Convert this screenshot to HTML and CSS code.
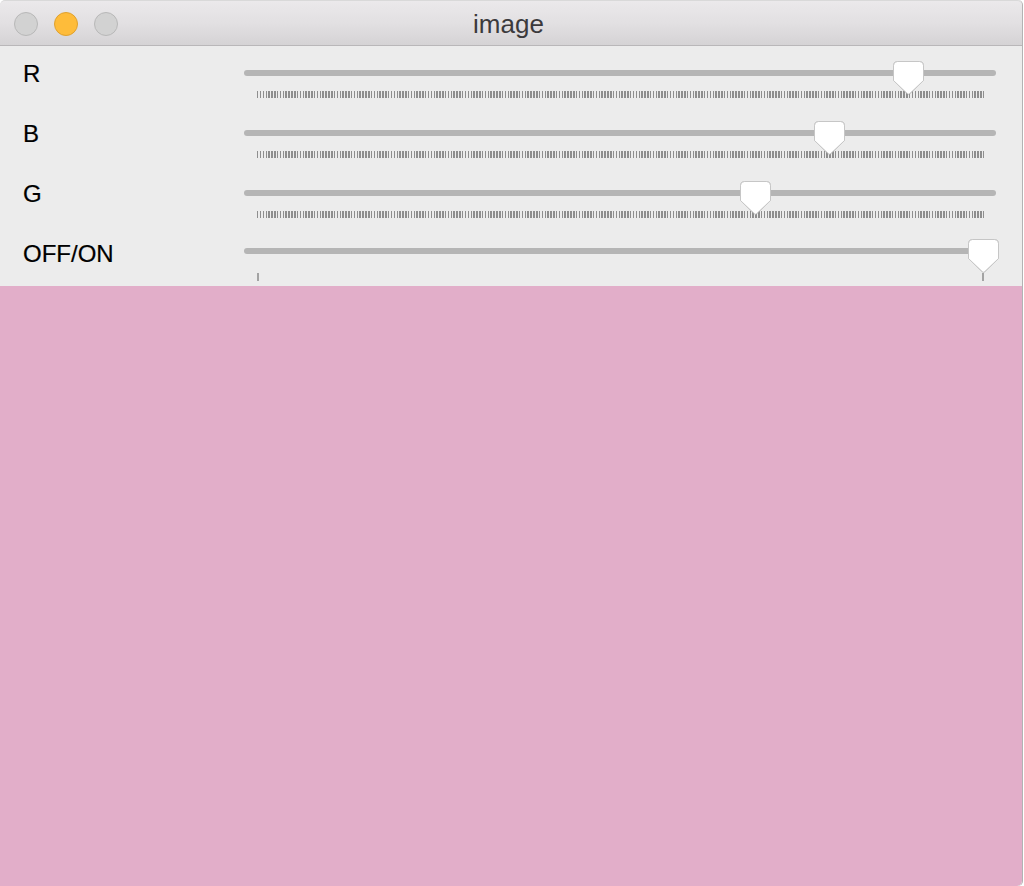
FILE: index.html
```html
<!DOCTYPE html>
<html>
<head>
<meta charset="utf-8">
<title>image</title>
<link rel="stylesheet" href="styles.css">
</head>
<body>
<div class="window">
  <div class="titlebar">
    <div class="lights">
      <span class="light"></span>
      <span class="light light-min"></span>
      <span class="light"></span>
    </div>
    <div class="title">image</div>
  </div>
  <div class="panel">
    <div class="row">
      <div class="label">R</div>
      <div class="slider">
        <div class="track">
          <svg class="thumb" style="--v:229" viewBox="0 0 31 34" width="31" height="34"><path d="M4.5 0.5H26.5Q30.5 0.5 30.5 4.5V19.5L16.8 32.6Q15.5 33.8 14.2 32.6L0.5 19.5V4.5Q0.5 0.5 4.5 0.5Z"/></svg>
        </div>
        <div class="ticks"></div>
      </div>
    </div>
    <div class="row">
      <div class="label">B</div>
      <div class="slider">
        <div class="track">
          <svg class="thumb" style="--v:201" viewBox="0 0 31 34" width="31" height="34"><path d="M4.5 0.5H26.5Q30.5 0.5 30.5 4.5V19.5L16.8 32.6Q15.5 33.8 14.2 32.6L0.5 19.5V4.5Q0.5 0.5 4.5 0.5Z"/></svg>
        </div>
        <div class="ticks"></div>
      </div>
    </div>
    <div class="row">
      <div class="label">G</div>
      <div class="slider">
        <div class="track">
          <svg class="thumb" style="--v:175" viewBox="0 0 31 34" width="31" height="34"><path d="M4.5 0.5H26.5Q30.5 0.5 30.5 4.5V19.5L16.8 32.6Q15.5 33.8 14.2 32.6L0.5 19.5V4.5Q0.5 0.5 4.5 0.5Z"/></svg>
        </div>
        <div class="ticks"></div>
      </div>
    </div>
    <div class="row row-switch">
      <div class="label">OFF/ON</div>
      <div class="slider">
        <div class="track">
          <svg class="thumb" style="--v:1;--max:1" viewBox="0 0 31 34" width="31" height="34"><path d="M4.5 0.5H26.5Q30.5 0.5 30.5 4.5V19.5L16.8 32.6Q15.5 33.8 14.2 32.6L0.5 19.5V4.5Q0.5 0.5 4.5 0.5Z"/></svg>
        </div>
        <div class="ticks ticks-two"></div>
      </div>
    </div>
  </div>
  <div class="canvas"></div>
</div>
</body>
</html>
```
FILE: styles.css
```css
html, body {
  margin: 0;
  padding: 0;
  background: #ffffff;
}

body {
  width: 1024px;
  height: 886px;
  overflow: hidden;
  font-family: "Liberation Sans", Arial, sans-serif;
}

.window {
  width: 1022px;
  height: 886px;
  border-right: 1px solid #b3b3b3;
  border-radius: 5px 5px 5px 0;
  overflow: hidden;
  background: #ececec;
}

.titlebar {
  height: 46px;
  box-sizing: border-box;
  border-bottom: 1px solid #b9b7b9;
  border-top: 1px solid #d9d9d9;
  border-radius: 5px 5px 0 0;
  background: linear-gradient(to bottom, #ebe9eb 0%, #e2e0e2 50%, #d5d3d5 100%);
  display: grid;
  grid-template-columns: 1fr;
}

.lights {
  grid-area: 1 / 1;
  display: flex;
  gap: 16px;
  padding-left: 14px;
  padding-top: 11px;
  align-items: flex-start;
}

.light {
  width: 22px;
  height: 22px;
  border-radius: 50%;
  background: #d2d2d2;
  border: 1px solid #b8b8b8;
}

.light-min {
  background: #febc3a;
  border-color: #dfa12f;
}

.title {
  grid-area: 1 / 1;
  text-align: center;
  font-size: 26px;
  line-height: 42px;
  padding-top: 2px;
  padding-right: 5px;
  color: #3b3a3c;
}

.panel {
  background: #ececec;
  display: flex;
  flex-direction: column;
}

.row {
  height: 60px;
  display: flex;
}

.label {
  width: 221px;
  padding-left: 23px;
  padding-top: 16px;
  font-size: 24px;
  line-height: 24px;
  color: #000000;
  -webkit-text-stroke: 0.2px #000000;
}

.slider {
  width: 752px;
  display: flex;
  flex-direction: column;
}

.track {
  position: relative;
  margin-top: 24px;
  height: 6px;
  border-radius: 3px;
  background: #b5b5b5;
}

.row-switch .track {
  margin-top: 22px;
}

.thumb {
  --max: 255;
  position: absolute;
  top: -9px;
  left: calc(13px + 726px * var(--v) / var(--max) - 15.5px);
  overflow: visible;
  filter: drop-shadow(0 0.5px 0.6px rgba(0, 0, 0, 0.25));
}

.thumb path {
  fill: #ffffff;
  stroke: #c6c6c6;
  stroke-width: 1;
}

.ticks {
  margin-top: 15px;
  margin-left: 13px;
  width: 727px;
  height: 7px;
  background: repeating-linear-gradient(to right, #8e8e8e 0, #8e8e8e 1.5px, transparent 1.5px, transparent 2.84706px);
}

.ticks-two {
  margin-top: 19px;
  height: 8px;
  box-sizing: border-box;
  background: none;
  border-left: 2px solid #a3a3a3;
  border-right: 2px solid #a3a3a3;
}

.canvas {
  height: 600px;
  background: #e2aec9;
  border-bottom-right-radius: 5px;
}
```
